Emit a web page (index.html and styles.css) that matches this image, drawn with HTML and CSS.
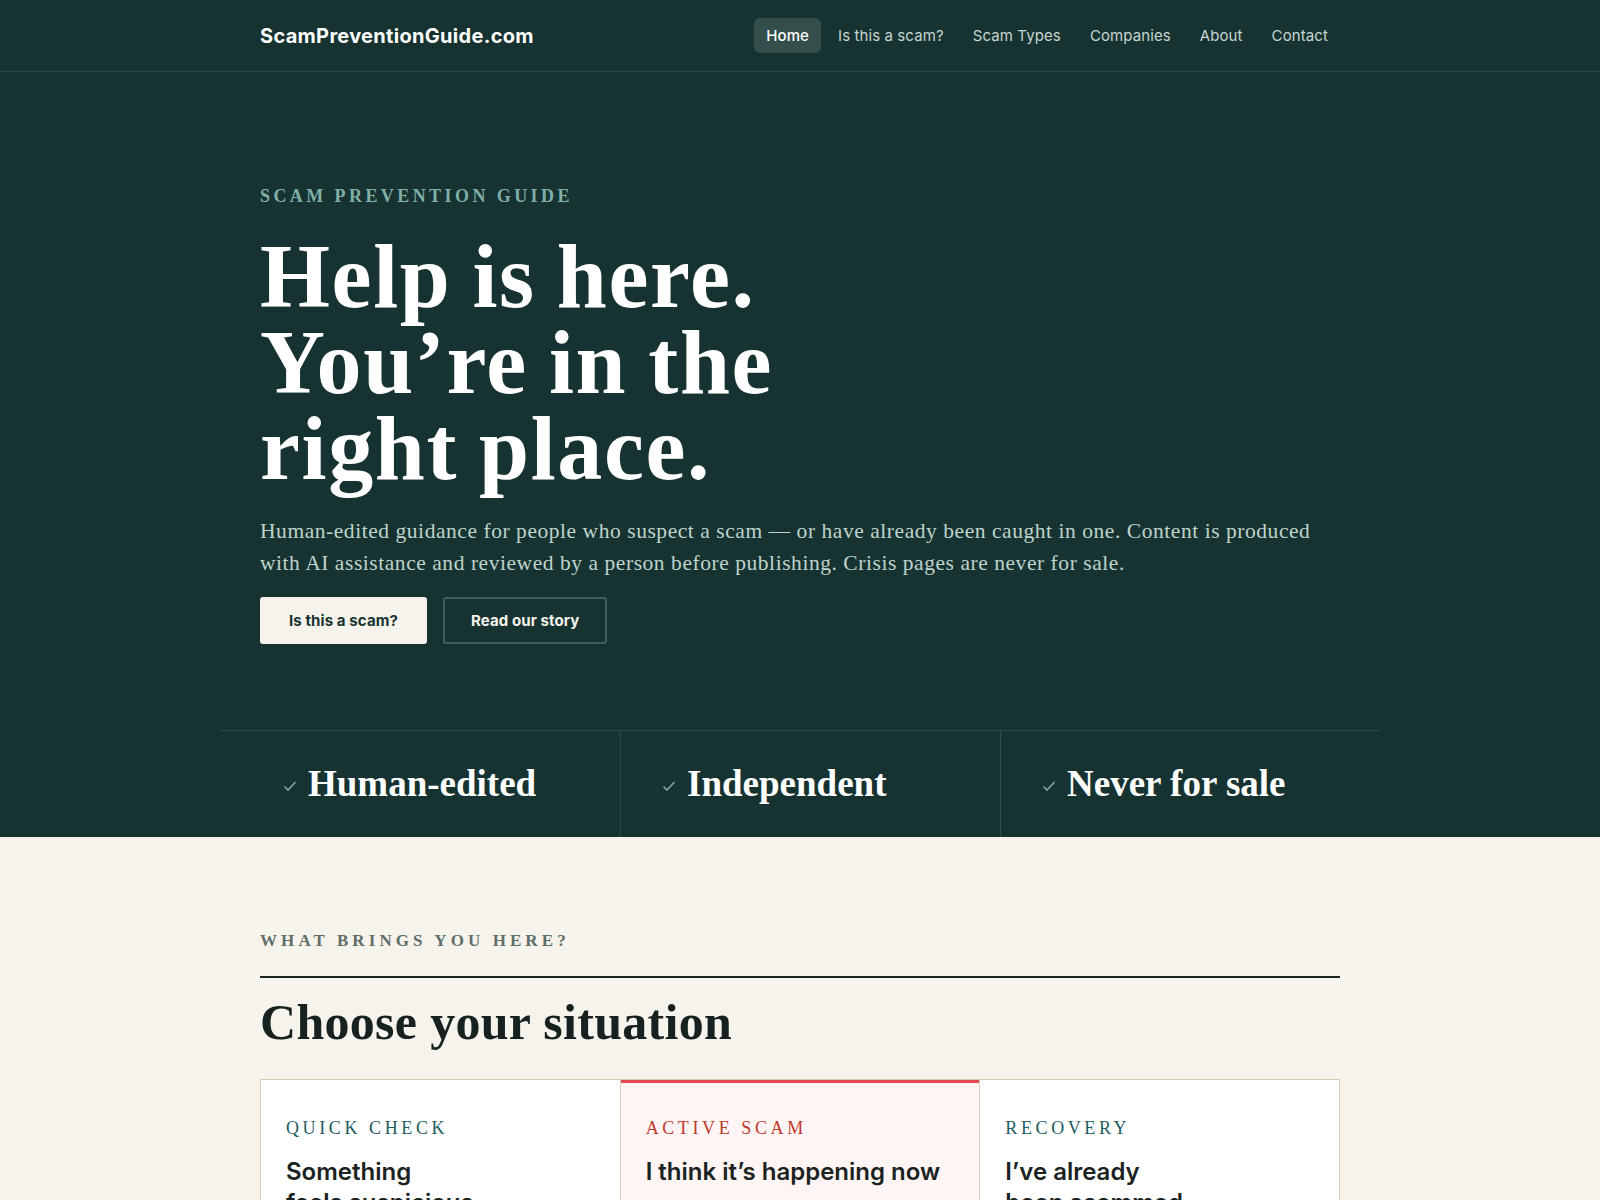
FILE: index.html
```html
<!DOCTYPE html>
<html lang="en">
<head>
<meta charset="utf-8">
<title>ScamPreventionGuide.com</title>
<link rel="stylesheet" href="styles.css">
</head>
<body>
<div class="dark">
  <header class="nav">
    <div class="container nav-inner">
      <a class="logo" href="#">ScamPreventionGuide.com</a>
      <nav class="menu">
        <a class="menu-link active" href="#">Home</a>
        <a class="menu-link" href="#">Is this a scam?</a>
        <a class="menu-link" href="#">Scam Types</a>
        <a class="menu-link" href="#">Companies</a>
        <a class="menu-link" href="#">About</a>
        <a class="menu-link" href="#">Contact</a>
      </nav>
    </div>
  </header>

  <section class="hero">
    <div class="container hero-inner">
      <p class="hero-eyebrow">SCAM PREVENTION GUIDE</p>
      <h1 class="hero-title">Help is here.<br>You’re in the<br>right place.</h1>
      <p class="hero-lead">Human-edited guidance for people who suspect a scam — or have already been caught in one. Content is produced with AI assistance and reviewed by a person before publishing. Crisis pages are never for sale.</p>
      <div class="hero-actions">
        <a class="btn btn-light" href="#">Is this a scam?</a>
        <a class="btn btn-outline" href="#">Read our story</a>
      </div>
    </div>
    <div class="trust">
      <div class="trust-item trust-first">
        <svg class="check" viewBox="0 0 14 12" width="14" height="12"><path d="M1.5 6.5 L5 10 L12.5 2" fill="none" stroke="currentColor" stroke-width="1.6"/></svg>
        <span>Human-edited</span>
      </div>
      <div class="trust-item">
        <svg class="check" viewBox="0 0 14 12" width="14" height="12"><path d="M1.5 6.5 L5 10 L12.5 2" fill="none" stroke="currentColor" stroke-width="1.6"/></svg>
        <span>Independent</span>
      </div>
      <div class="trust-item">
        <svg class="check" viewBox="0 0 14 12" width="14" height="12"><path d="M1.5 6.5 L5 10 L12.5 2" fill="none" stroke="currentColor" stroke-width="1.6"/></svg>
        <span>Never for sale</span>
      </div>
    </div>
  </section>
</div>

<main class="light">
  <div class="container">
    <p class="section-eyebrow">WHAT BRINGS YOU HERE?</p>
    <h2 class="section-title">Choose your situation</h2>
    <div class="cards">
      <a class="card" href="#">
        <p class="card-eyebrow">QUICK CHECK</p>
        <h3 class="card-title">Something<br>feels suspicious</h3>
        <p class="card-text">Check a message, call, website or offer against the warning signs before you reply or pay.</p>
      </a>
      <a class="card card-alert" href="#">
        <p class="card-eyebrow card-eyebrow-alert">ACTIVE SCAM</p>
        <h3 class="card-title">I think it’s happening now</h3>
        <p class="card-text">Stop contact, protect your money and accounts, and find out who to call first.</p>
      </a>
      <a class="card" href="#">
        <p class="card-eyebrow">RECOVERY</p>
        <h3 class="card-title">I’ve already<br>been scammed</h3>
        <p class="card-text">Report it, try to recover funds, and get support for what comes next.</p>
      </a>
    </div>
  </div>
</main>
</body>
</html>
```

FILE: styles.css
```css
* { box-sizing: border-box; }

html, body {
  margin: 0;
  padding: 0;
}

body {
  background: #f6f3ec;
  font-family: "Inter", "Liberation Sans", sans-serif;
  color: #172220;
}

a { text-decoration: none; color: inherit; }

.container {
  width: 1080px;
  margin: 0 auto;
}

.dark {
  background: #163331;
}

/* NAV */
.nav {
  border-bottom: 1px solid #2a4744;
}

.nav-inner {
  height: 71px;
  display: flex;
  align-items: center;
  justify-content: space-between;
}

.logo {
  color: #ffffff;
  font-size: 20px;
  font-weight: 700;
  letter-spacing: 0.3px;
}

.menu {
  display: flex;
  align-items: center;
  gap: 5px;
}

.menu-link {
  color: #c7d5d1;
  font-size: 15px;
  line-height: 19px;
  padding: 8px 12px;
  border-radius: 6px;
  letter-spacing: 0.1px;
}

.menu-link.active {
  background: #344f4b;
  color: #ffffff;
  font-weight: 500;
}

/* HERO */
.hero-inner {
  padding: 113px 0 86px;
}

.hero-eyebrow {
  margin: 0 0 27px;
  font-family: "Liberation Serif", serif;
  font-weight: 700;
  font-size: 18px;
  line-height: 22px;
  letter-spacing: 0.19em;
  color: #7fb0a8;
}

.hero-title {
  margin: 0 0 22px;
  font-family: "Liberation Serif", serif;
  font-weight: 700;
  font-size: 90px;
  line-height: 86px;
  letter-spacing: 1.6px;
  word-spacing: -3px;
  color: #ffffff;
}

.hero-lead {
  margin: 0 0 20px;
  font-family: "Liberation Serif", serif;
  font-size: 21.5px;
  line-height: 31.5px;
  letter-spacing: 0.55px;
  color: #bfd3cc;
  position: relative;
  top: 2px;
}

.hero-actions {
  display: flex;
  gap: 16px;
}

.btn {
  display: inline-block;
  font-size: 15px;
  line-height: 19px;
  font-weight: 700;
  padding: 12px 27px;
  border: 2px solid transparent;
  border-radius: 3px;
  letter-spacing: 0.1px;
}

.btn-light {
  background: #f6f3ec;
  border-color: #f6f3ec;
  color: #173331;
}

.btn-outline {
  padding: 12px 26px;
  border-color: #3a615b;
  color: #f6f3ec;
}

/* TRUST STRIP */
.trust {
  width: 1160px;
  margin: 0 auto;
  border-top: 1px solid #2b4c49;
  display: grid;
  grid-template-columns: 400px 380px 380px;
}

.trust-item {
  display: flex;
  align-items: center;
  gap: 11px;
  padding: 31px 20px 32px 41px;
  font-family: "Liberation Serif", serif;
  font-weight: 700;
  font-size: 37px;
  line-height: 43px;
  color: #ffffff;
}

.trust-item + .trust-item {
  border-left: 1px solid #2b4c49;
}

.trust-first {
  padding-left: 63px;
}

.check {
  color: #7fa9a2;
  flex: none;
  margin-top: 4px;
}

/* LIGHT SECTION */
.light {
  padding: 94px 0 80px;
}

.section-eyebrow {
  margin: 0;
  padding-bottom: 25px;
  border-bottom: 2px solid #1a2422;
  font-family: "Liberation Serif", serif;
  font-weight: 700;
  font-size: 17px;
  line-height: 20px;
  letter-spacing: 0.24em;
  color: #5f6e69;
}

.section-title {
  margin: 18px 0 31px;
  font-family: "Liberation Serif", serif;
  font-weight: 700;
  font-size: 50px;
  line-height: 52px;
  letter-spacing: 0.3px;
  color: #172220;
}

.cards {
  display: grid;
  grid-template-columns: 1fr 1fr 1fr;
  gap: 1px;
  background: #d6cdb9;
  border: 1px solid #d6cdb9;
}

.card {
  background: #ffffff;
  padding: 37px 25px 40px;
}

.card-alert {
  background: #fff5f4;
  box-shadow: inset 0 3px 0 #e5484d;
}

.card-eyebrow {
  margin: 0 0 17px;
  font-family: "Liberation Serif", serif;
  font-size: 18px;
  line-height: 22px;
  letter-spacing: 0.2em;
  color: #1d5c5e;
}

.card-eyebrow-alert {
  color: #c0392b;
}

.card-title {
  margin: 0 0 14px;
  font-size: 24px;
  line-height: 31px;
  font-weight: 600;
  letter-spacing: 0;
  color: #1a2321;
}

.card-text {
  margin: 0;
  font-family: "Liberation Serif", serif;
  font-size: 18px;
  line-height: 28px;
  color: #4a5753;
}
```
